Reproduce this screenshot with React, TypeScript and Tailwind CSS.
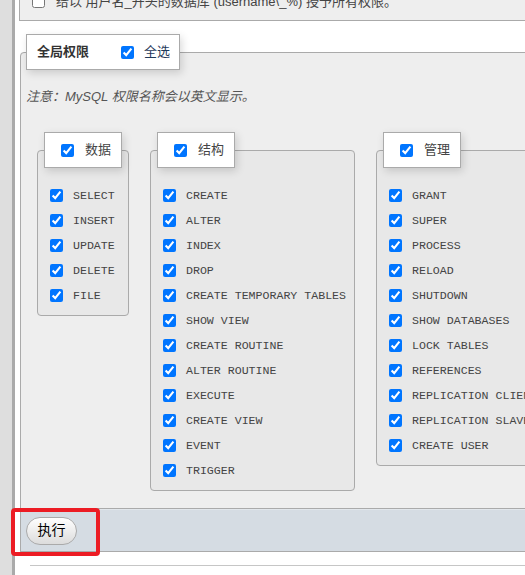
import React from "react";

interface PrivGroup {
  title: string;
  width: string;
  items: string[];
}

const groups: PrivGroup[] = [
  {
    title: "数据",
    width: "w-[92px]",
    items: ["SELECT", "INSERT", "UPDATE", "DELETE", "FILE"],
  },
  {
    title: "结构",
    width: "w-[205px]",
    items: [
      "CREATE",
      "ALTER",
      "INDEX",
      "DROP",
      "CREATE TEMPORARY TABLES",
      "SHOW VIEW",
      "CREATE ROUTINE",
      "ALTER ROUTINE",
      "EXECUTE",
      "CREATE VIEW",
      "EVENT",
      "TRIGGER",
    ],
  },
  {
    title: "管理",
    width: "w-[170px]",
    items: [
      "GRANT",
      "SUPER",
      "PROCESS",
      "RELOAD",
      "SHUTDOWN",
      "SHOW DATABASES",
      "LOCK TABLES",
      "REFERENCES",
      "REPLICATION CLIENT",
      "REPLICATION SLAVE",
      "CREATE USER",
    ],
  },
];

const Check = ({ checked = true }: { checked?: boolean }) => (
  <input type="checkbox" defaultChecked={checked} className="m-0 w-[13px] h-[13px] shrink-0" />
);

const GroupBox = ({ group }: { group: PrivGroup }) => (
  <fieldset
    className={`${group.width} shrink-0 border border-[#aaa] rounded-[4px] bg-[#e8e8e8] pl-[6px] pr-[6px] pt-[15px] pb-[7px]`}
  >
    <legend className="bg-white border border-[#aaa] shadow-[2px_3px_8px_rgba(0,0,0,0.15)]">
      <div className="flex items-center h-[34px] pl-[16px] pr-[10px] gap-[11px]">
        <Check />
        <span className="text-[13px] text-[#444]">{group.title}</span>
      </div>
    </legend>
    {group.items.map((item) => (
      <div key={item} className="flex items-center h-[25px] gap-[10px] pl-[6px] whitespace-nowrap">
        <Check />
        <span className="font-['Liberation_Mono',monospace] text-[11.6px] text-[#444]">{item}</span>
      </div>
    ))}
  </fieldset>
);

export default function App() {
  return (
    <div className="relative w-[525px] h-[575px] overflow-hidden bg-white flex font-['Liberation_Sans','Noto_Sans_CJK_SC',sans-serif]">
      {/* left navigation edge */}
      <div className="w-[15px] shrink-0 bg-[#dedede] border-r-[3px] border-[#aaa]" />

      <div className="w-[600px] shrink-0 pl-[4px] flex flex-col">
        {/* wildcard database option */}
        <div className="h-[21px] overflow-hidden border-l border-b border-[#aaa] bg-[#eee]">
          <div className="flex items-center h-[21px] -mt-[9px] pl-[12px] gap-[11px] whitespace-nowrap">
            <Check checked={false} />
            <span className="text-[13px] text-[#444]">给以 用户名_开头的数据库 (username\_%) 授予所有权限。</span>
          </div>
        </div>

        <fieldset className="mt-[13px] ml-[1px] border border-[#aaa] rounded-tl-[4px] bg-[#eee] pl-[5px] pb-[17px]">
          <legend className="bg-white border border-[#aaa] shadow-[2px_3px_8px_rgba(0,0,0,0.15)]">
            <div className="flex items-center h-[34px] pl-[10px] pr-[9px]">
              <span className="text-[13px] font-semibold text-[#333] mr-[32px]">全局权限</span>
              <Check />
              <span className="text-[13px] text-[#1f3a5a] ml-[10px]">全选</span>
            </div>
          </legend>

          <p className="mt-[17px] h-[20px] leading-[20px] text-[13px] italic text-[#555]">
            注意：MySQL 权限名称会以英文显示。
          </p>

          <div className="mt-[25px] ml-[11px] flex items-start gap-[21px]">
            {groups.map((g) => (
              <GroupBox key={g.title} group={g} />
            ))}
          </div>
        </fieldset>

        {/* form footer */}
        <div className="ml-[1px] h-[43px] flex items-center pl-[5px] bg-[#d5dce3] border-l border-b border-[#aaa] border-t border-t-[#e2e7ec]">
          <button className="w-[51px] h-[28px] rounded-full border border-[#aaa] bg-gradient-to-b from-white to-[#dcdcdc] text-[14px] text-black flex items-center justify-center">
            执行
          </button>
        </div>

        <div className="mt-[13px] ml-[11px] border-t border-[#c6c6c6]" />
      </div>

      {/* highlight around the submit button */}
      <div className="absolute left-[11px] top-[508px] w-[89px] h-[48px] border-4 border-[#ec1c24] rounded-[4px]" />
    </div>
  );
}
